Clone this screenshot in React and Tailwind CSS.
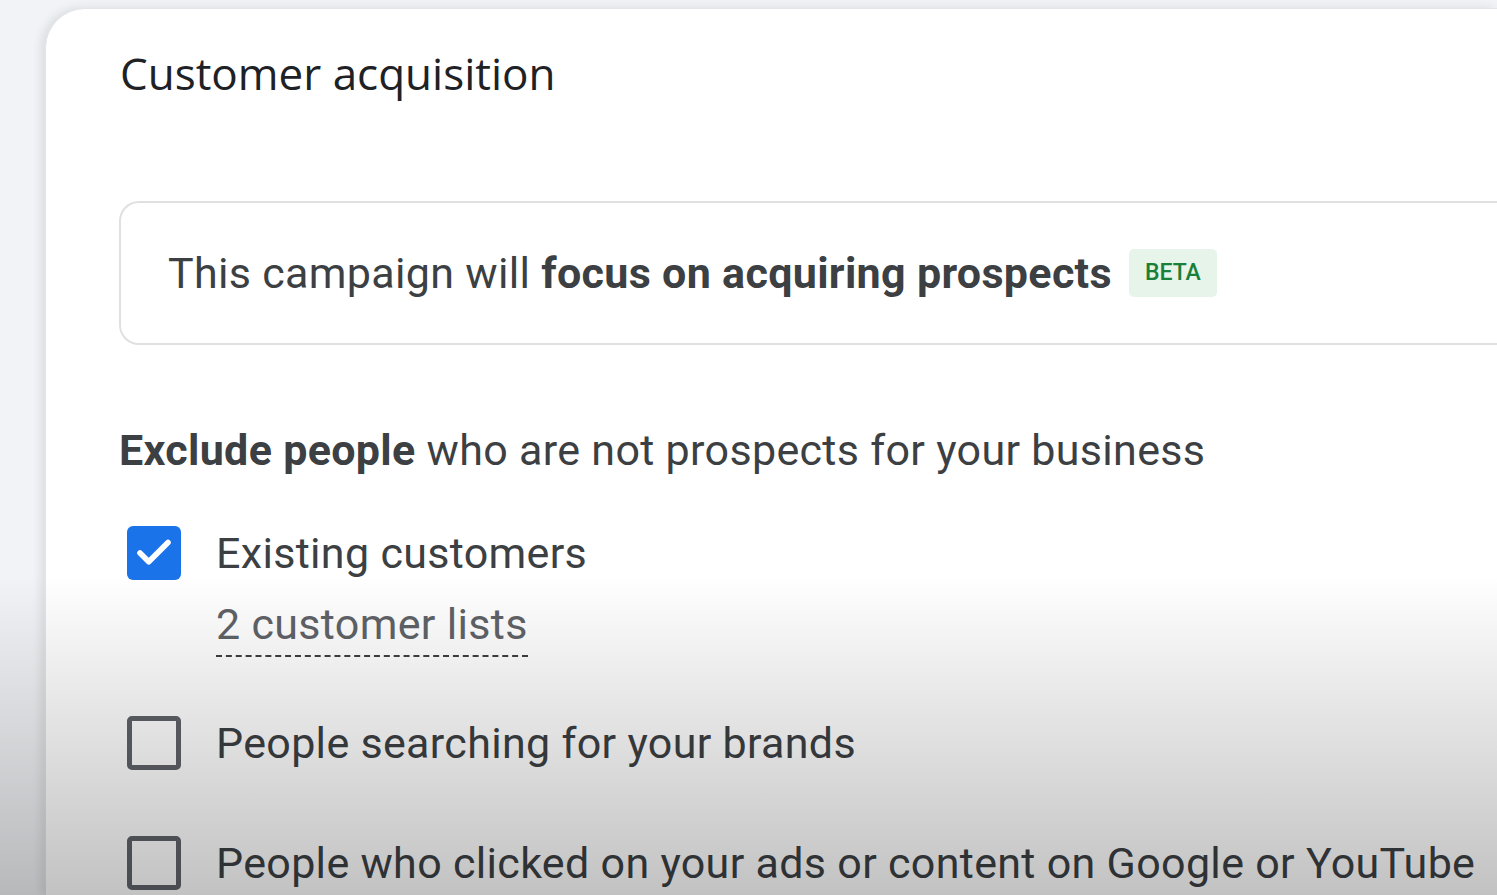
import { Check } from 'lucide-react'

const OPTIONS = [
  { id: 'existing', label: 'Existing customers', checked: true, sub: '2 customer lists', gap: 'mt-[52px]' },
  { id: 'brands', label: 'People searching for your brands', checked: false, gap: 'mt-[59px]' },
  { id: 'clicked', label: 'People who clicked on your ads or content on Google or YouTube', checked: false, gap: 'mt-[66px]' },
]

function Checkbox({ checked }) {
  if (checked) {
    return (
      <div className="w-[54px] h-[54px] shrink-0 rounded-[6px] bg-[#1a73e8] flex items-center justify-center">
        <Check className="w-[42px] h-[42px] text-white" strokeWidth={3.2} />
      </div>
    )
  }
  return <div className="w-[54px] h-[54px] shrink-0 rounded-[5px] border-[5px] border-[#5f6368]" />
}

export default function App() {
  return (
    <div
      className="relative h-[895px] overflow-hidden bg-[#f1f3f6] pl-[45px] pt-[8px] text-[#3c4043] tracking-[0.02em]"
      style={{ fontFamily: 'Roboto, "Liberation Sans", sans-serif' }}
    >
      <div className="h-full bg-white rounded-tl-[40px] border-t border-l border-[#e3e5e8] shadow-[-4px_0_10px_rgba(60,64,67,0.12)] pl-[73px]">
        <h1
          className="pt-[40px] pl-[1px] text-[44px] leading-[48px] text-[#202124] font-normal tracking-normal"
          style={{ fontFamily: '"Open Sans", Roboto, sans-serif' }}
        >
          Customer acquisition
        </h1>

        {/* Goal summary */}
        <div className="mt-[104px] h-[144px] rounded-l-[20px] border-2 border-r-0 border-[#e0e0e0] flex items-center pl-[47px]">
          <span className="text-[43px] leading-[48px] text-[#3c4043]">
            This campaign will <span className="font-bold">focus on acquiring prospects</span>
          </span>
          <span className="ml-[17px] px-[16px] h-[48px] flex items-center rounded-[5px] bg-[#e6f4ea] text-[#188038] text-[23px] font-medium tracking-normal">
            BETA
          </span>
        </div>

        <p className="mt-[81px] text-[43px] leading-[48px]">
          <span className="font-bold">Exclude people</span> who are not prospects for your business
        </p>

        <div className="flex flex-col">
          {OPTIONS.map((opt) => (
            <div key={opt.id} className={`${opt.gap} flex items-start gap-[35px] pl-[8px]`}>
              <Checkbox checked={opt.checked} />
              <div className="flex flex-col">
                <span className="text-[43px] leading-[54px] whitespace-nowrap">{opt.label}</span>
                {opt.sub && (
                  <span className="mt-[20px] self-start text-[43px] leading-[48px] text-[#5f6368] border-b-[2px] border-dashed border-[#3c4043] pb-[7px]">
                    {opt.sub}
                  </span>
                )}
              </div>
            </div>
          ))}
        </div>
      </div>

      {/* bottom shading over the whole view */}
      <div className="pointer-events-none absolute inset-x-0 bottom-0 h-[320px] bg-gradient-to-b from-transparent to-[rgba(0,0,0,0.24)]" />
    </div>
  )
}
